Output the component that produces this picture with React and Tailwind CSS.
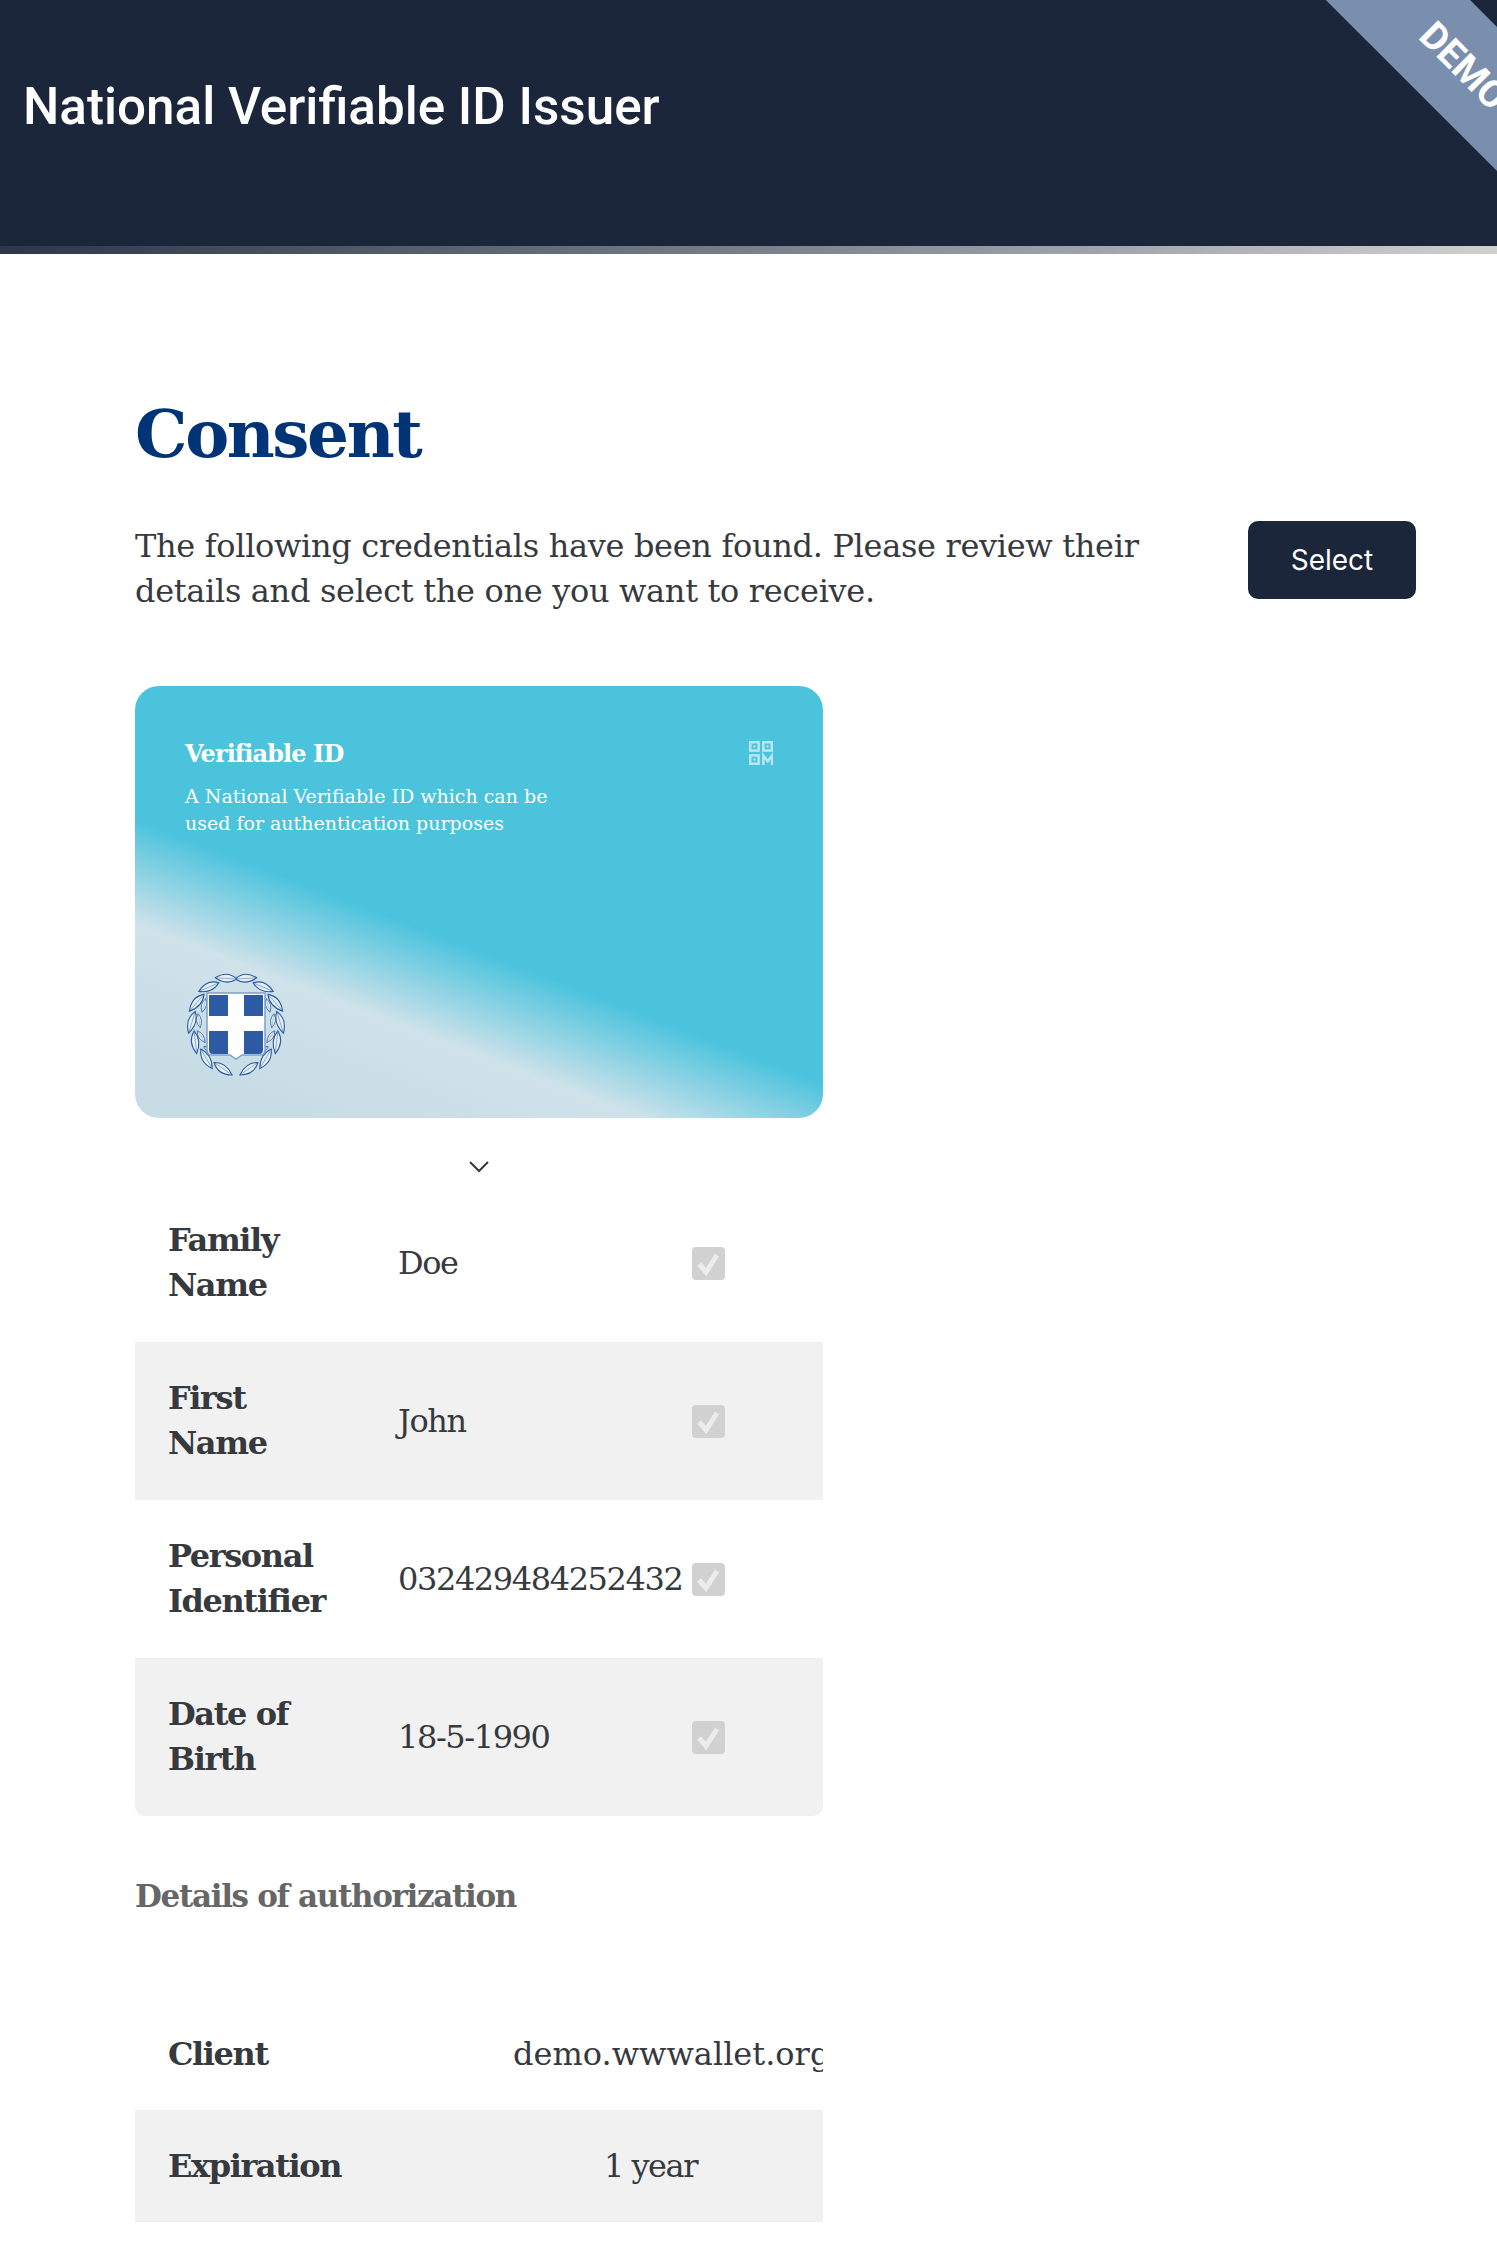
const rows = [
  ["Family Name", "Doe"],
  ["First Name", "John"],
  ["Personal Identifier", "032429484252432"],
  ["Date of Birth", "18-5-1990"],
];

function Leaf({ transform }) {
  return (
    <g transform={transform}>
      <path d="M-11 0 Q-1 -8 11 0 Q-1 7 -11 0Z" fill="#e4eef4" stroke="#2b5aa0" strokeWidth="1.1" />
      <path d="M-10 0 L10 0" stroke="#5c86bb" strokeWidth="0.6" />
    </g>
  );
}

function Emblem() {
  // laurel wreath: leaves round the shield, mirrored left and right
  const outer = [13, 38, 63, 88, 113, 138, 163];
  const inner = [60, 85, 110, 135];
  return (
    <svg viewBox="0 0 102 108" className="w-[102px] h-[108px]">
      {inner.map((a) => (
        <g key={a}>
          <Leaf transform={`translate(51 54) rotate(${a}) translate(0 -37) rotate(14) scale(0.65)`} />
          <Leaf transform={`translate(51 54) scale(-1 1) rotate(${a}) translate(0 -37) rotate(14) scale(0.65)`} />
        </g>
      ))}
      {outer.map((a) => (
        <g key={a}>
          <Leaf transform={`translate(51 54) scale(0.98 1.04) rotate(${a}) translate(0 -45) rotate(-16)`} />
          <Leaf transform={`translate(51 54) scale(-0.98 1.04) rotate(${a}) translate(0 -45) rotate(-16)`} />
        </g>
      ))}
      <path d="M22 23 H80 V80 Q80 85 75 85 H57 L51 89 L45 85 H27 Q22 85 22 80Z" fill="#ffffff" stroke="#7f9fca" strokeWidth="1.5" />
      <rect x="24" y="25" width="19" height="21" fill="#2d5ba3" />
      <rect x="59" y="25" width="19" height="21" fill="#2d5ba3" />
      <path d="M24 61 H43 V84 H28 Q24 84 24 80Z" fill="#2d5ba3" />
      <path d="M59 61 H78 V80 Q78 84 74 84 H59Z" fill="#2d5ba3" />
    </svg>
  );
}

function QrIcon() {
  return (
    <svg viewBox="0 0 25 25" className="w-[24px] h-[24px] mt-[5px]" fill="none" stroke="#b9e6f0" strokeWidth="2.6">
      <rect x="1.3" y="1.3" width="8.7" height="8.7" />
      <rect x="15" y="1.3" width="8.7" height="8.7" />
      <rect x="1.3" y="15" width="8.7" height="8.7" />
      <rect x="4.5" y="4.5" width="2.2" height="2.2" fill="#b9e6f0" strokeWidth="0" />
      <rect x="18.2" y="4.5" width="2.2" height="2.2" fill="#b9e6f0" strokeWidth="0" />
      <rect x="4.5" y="18.2" width="2.2" height="2.2" fill="#b9e6f0" strokeWidth="0" />
      <path d="M15 25 V15 L19.5 21 L24 15 V25" />
    </svg>
  );
}

function Check() {
  return (
    <div className="w-[33px] h-[33px] rounded-[4px] bg-[#d1d1d1] flex items-center justify-center">
      <svg viewBox="0 0 33 33" className="w-[33px] h-[33px]" fill="none" stroke="#ececec" strokeWidth="5">
        <path d="M7 17 L14 25 L25 8" />
      </svg>
    </div>
  );
}

export default function App() {
  return (
    <div className="w-[1497px] h-[2253px] overflow-hidden bg-white font-['DejaVu_Serif',serif] text-[#36393d]">
      <header className="relative overflow-hidden">
        <div className="h-[246px] bg-[#1b263a]">
          <h1 className="pl-[23px] pt-[77px] font-['Roboto',sans-serif] font-medium text-[51.2px] leading-[60px] text-white">
            National Verifiable ID Issuer
          </h1>
        </div>
        <div className="h-[8px] bg-gradient-to-r from-[#2c374a] to-[#d0d0d0]" />
        <div className="absolute right-[-200px] top-[48px] w-[400px] h-[102px] rotate-45 bg-[#7a8fae] flex items-center justify-center pr-[94px] font-['Roboto',sans-serif] font-bold text-[38px] text-white">
          DEMO
        </div>
      </header>

      <main className="pl-[135px] pr-[81px] pt-[135px]">
        <h2 className="text-[66px] leading-[90px] font-bold text-[#003476] tracking-[-2.4px]">Consent</h2>

        <div className="mt-[42px] flex justify-between items-start">
          <p className="w-[1040px] mt-[3px] text-[32px] leading-[45px] tracking-[-0.32px]">
            The following credentials have been found. Please review their details and select the one you want to receive.
          </p>
          <button className="w-[168px] h-[78px] rounded-[10px] bg-[#1b263a] text-white font-['Inter',sans-serif] text-[28px]">
            Select
          </button>
        </div>

        <div className="w-[688px] mt-[72px]">
          <div className="h-[432px] rounded-[24px] px-[50px] pt-[50px] pb-[40px] flex flex-col justify-between text-white bg-[linear-gradient(201deg,#4bc3dd_57%,#cfe2ea_72%,#c8dce6_90%)]">
            <div className="flex justify-between">
              <div>
                <div className="text-[24px] leading-[36px] font-bold tracking-[-0.9px]">Verifiable ID</div>
                <div className="w-[400px] mt-[11px] text-[19px] leading-[27px]">
                  A National Verifiable ID which can be used for authentication purposes
                </div>
              </div>
              <QrIcon />
            </div>
            <Emblem />
          </div>

          <div className="flex justify-center pt-[43px] pb-[11px]">
            <svg viewBox="0 0 20 12" className="w-[20px] h-[12px]" fill="none" stroke="#36393d" strokeWidth="2">
              <path d="M1 1 L10 10 L19 1" />
            </svg>
          </div>

          <div className="rounded-b-[10px] overflow-hidden">
            {rows.map(([label, value], i) => (
              <div key={label} className={`h-[158px] flex items-center ${i % 2 ? "bg-[#f1f1f1]" : "bg-white"}`}>
                <div className="w-[263px] pl-[33px] pr-[60px] text-[32px] leading-[45px] font-bold tracking-[-1.4px]">{label}</div>
                <div className="w-[294px] text-[32px] tracking-[-1.4px] whitespace-nowrap">{value}</div>
                <Check />
              </div>
            ))}
          </div>

          <h3 className="mt-[58px] text-[31px] leading-[45px] font-bold text-[#666666] tracking-[-1.33px] whitespace-nowrap">
            Details of authorization
          </h3>

          <div className="mt-[79px]">
            <div className="h-[112px] flex items-center overflow-hidden">
              <div className="w-[378px] shrink-0 pl-[33px] text-[32px] font-bold tracking-[-1.4px]">Client</div>
              <div className="text-[32px] whitespace-nowrap">demo.wwwallet.org</div>
            </div>
            <div className="h-[112px] flex items-center bg-[#f1f1f1]">
              <div className="w-[469px] shrink-0 pl-[33px] text-[32px] font-bold tracking-[-1.4px]">Expiration</div>
              <div className="text-[32px] tracking-[-1.5px] whitespace-nowrap">1 year</div>
            </div>
          </div>
        </div>
      </main>
    </div>
  );
}
